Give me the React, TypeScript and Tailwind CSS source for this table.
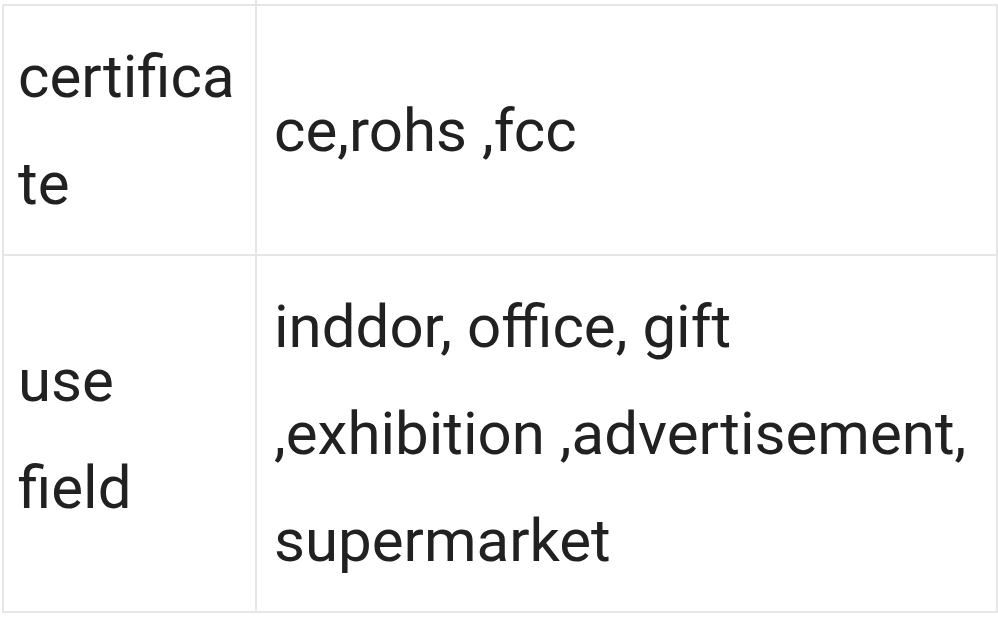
export default function App() {
  const rows = [
    { label: 'certificate', value: 'ce,rohs ,fcc' },
    { label: 'use field', value: 'inddor, office, gift ,exhibition ,advertisement, supermarket' },
  ];

  return (
    <div
      className="h-[619px] w-[998px] overflow-hidden bg-white text-[60px] leading-[107px] text-[#212121]"
      style={{ fontFamily: 'Roboto, "Noto Sans", sans-serif' }}
    >
      {/* tail of the row above */}
      <div className="ml-[2px] h-[4px] w-[255px] border-r-2 border-[#e6e6e6]" />
      <div className="ml-[2px] grid w-[996px] grid-cols-[253px_1fr] border-l-2 border-t-2 border-[#e6e6e6]">
        {rows.map((row) => (
          <div key={row.label} className="contents">
            <div className="flex items-center border-b-2 border-r-2 border-[#e6e6e6] py-[17px] pl-[14px] pr-[16px]">
              <span className="min-w-0 [overflow-wrap:anywhere]">{row.label}</span>
            </div>
            <div className="flex items-center border-b-2 border-r-2 border-[#e6e6e6] py-[17px] pl-[17px] pr-[10px]">
              <span>{row.value}</span>
            </div>
          </div>
        ))}
      </div>
    </div>
  );
}
